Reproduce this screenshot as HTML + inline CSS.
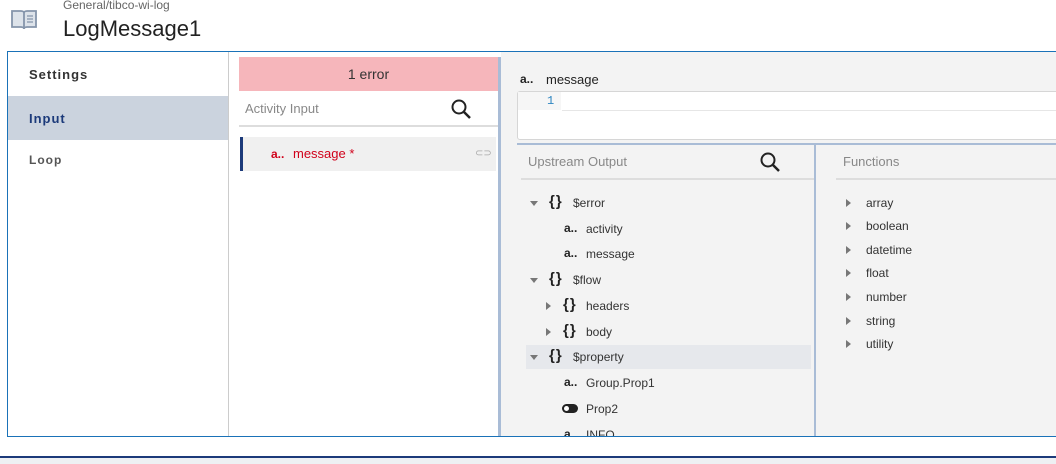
<!DOCTYPE html>
<html><head><meta charset="utf-8"><style>
*{box-sizing:border-box;margin:0;padding:0}
body{width:1056px;height:464px;overflow:hidden;background:#fff;font-family:"Liberation Sans",sans-serif;position:relative;color:#222}
.a{position:absolute}
.t{font-size:12px;color:#333;white-space:nowrap}
.ic{font-weight:bold;font-size:12px;color:#222}
.br{font-weight:bold;font-size:15px;color:#222;letter-spacing:1px}
.tri{width:0;height:0;border-left:4px solid transparent;border-right:4px solid transparent;border-top:5px solid #777}
.trr{width:0;height:0;border-top:4px solid transparent;border-bottom:4px solid transparent;border-left:5px solid #777}
</style></head><body>
<svg class="a" style="left:10px;top:8px" width="28" height="24" viewBox="0 0 28 24"><path d="M2 3h9c2 0 3 1 3 2v16c0-1-1-2-3-2H2z M26 3h-9c-2 0-3 1-3 2v16c0-1 1-2 3-2h9z" fill="#dde3ea" stroke="#8595ab" stroke-width="1.8"/><path d="M17 8h6M17 11h6M17 14h6" stroke="#8595ab" stroke-width="1.3"/></svg>
<div class="a" style="left:63px;top:-2px;font-size:12px;color:#666">General/tibco-wi-log</div>
<div class="a" style="left:63px;top:16px;font-size:22px;color:#222">LogMessage1</div>
<div class="a" style="left:7px;top:51px;width:1049px;height:386px;border:1px solid #1a72b8;border-right:none"></div>
<div class="a" style="left:8px;top:96px;width:221px;height:44px;background:#cbd3de"></div>
<div class="a" style="left:29px;top:67px;font-size:13px;font-weight:bold;letter-spacing:1px;color:#333">Settings</div>
<div class="a" style="left:29px;top:111px;font-size:13px;font-weight:bold;letter-spacing:1px;color:#1c3a7a">Input</div>
<div class="a" style="left:29px;top:153px;font-size:12px;font-weight:bold;letter-spacing:1px;color:#555">Loop</div>
<div class="a" style="left:228px;top:52px;width:1px;height:384px;background:#ccc"></div>
<div class="a" style="left:239px;top:57px;width:259px;height:34px;background:#f6b6bb;text-align:center;line-height:34px;font-size:14px;color:#333">1 error</div>
<div class="a" style="left:245px;top:101px;font-size:13px;color:#888">Activity Input</div>
<svg class="a" style="left:450px;top:98px" width="22" height="22"><circle cx="9" cy="9" r="6.5" fill="none" stroke="#222" stroke-width="2"/><path d="M14 14l6 6" stroke="#222" stroke-width="2.5"/></svg>
<div class="a" style="left:239px;top:125px;width:259px;height:2px;background:#ddd"></div>
<div class="a" style="left:240px;top:137px;width:256px;height:34px;background:#f0f0f0;border-left:3px solid #1c3a7a"></div>
<div class="a" style="left:271px;top:147px;font-size:12px;font-weight:bold;color:#d0021b">a..</div>
<div class="a" style="left:293px;top:146px;font-size:13px;color:#d0021b">message *</div>
<div class="a" style="left:475px;top:148px;font-size:10px;color:#aaa">⊂⊃</div>
<div class="a" style="left:498px;top:57px;width:3px;height:379px;background:#a9bcd6"></div>
<div class="a" style="left:501px;top:52px;width:555px;height:384px;background:#f3f3f3"></div>
<div class="a" style="left:520px;top:72px;font-size:12px;font-weight:bold;color:#222">a..</div>
<div class="a" style="left:546px;top:72px;font-size:13px;color:#222">message</div>
<div class="a" style="left:517px;top:91px;width:545px;height:49px;background:#fff;border:1px solid #d6d6d6;border-radius:3px"></div>
<div class="a" style="left:518px;top:92px;width:43px;height:18px;background:#f6f6f6"></div>
<div class="a" style="left:562px;top:110px;width:494px;height:1px;background:#e6e6e6"></div>
<div class="a" style="left:547px;top:94px;font-size:12px;color:#2e86c1;font-family:'Liberation Mono',monospace">1</div>
<div class="a" style="left:517px;top:143px;width:539px;height:2px;background:#a9bcd6"></div>
<div class="a" style="left:814px;top:145px;width:2px;height:291px;background:#a9bcd6"></div>
<div class="a" style="left:528px;top:154px;font-size:13px;color:#888">Upstream Output</div>
<svg class="a" style="left:759px;top:151px" width="22" height="22"><circle cx="9" cy="9" r="6.5" fill="none" stroke="#222" stroke-width="2"/><path d="M14 14l6 6" stroke="#222" stroke-width="2.5"/></svg>
<div class="a" style="left:521px;top:178px;width:293px;height:2px;background:#ddd"></div>
<div class="a" style="left:843px;top:154px;font-size:13px;color:#888">Functions</div>
<div class="a" style="left:836px;top:178px;width:220px;height:2px;background:#ddd"></div>
<div class="a" style="left:526px;top:345px;width:285px;height:24px;background:#e6e8ec"></div>
<div class="a tri" style="left:530px;top:201px"></div><div class="a br" style="left:549px;top:193px">{}</div><div class="a t" style="left:573px;top:196px">$error</div>
<div class="a ic" style="left:564px;top:221px">a..</div><div class="a t" style="left:586px;top:222px">activity</div>
<div class="a ic" style="left:564px;top:246px">a..</div><div class="a t" style="left:586px;top:247px">message</div>
<div class="a tri" style="left:530px;top:278px"></div><div class="a br" style="left:549px;top:270px">{}</div><div class="a t" style="left:573px;top:273px">$flow</div>
<div class="a trr" style="left:546px;top:302px"></div><div class="a br" style="left:563px;top:296px">{}</div><div class="a t" style="left:586px;top:299px">headers</div>
<div class="a trr" style="left:546px;top:328px"></div><div class="a br" style="left:563px;top:322px">{}</div><div class="a t" style="left:586px;top:325px">body</div>
<div class="a tri" style="left:530px;top:355px"></div><div class="a br" style="left:549px;top:347px">{}</div><div class="a t" style="left:573px;top:350px">$property</div>
<div class="a ic" style="left:564px;top:375px">a..</div><div class="a t" style="left:586px;top:376px">Group.Prop1</div>
<div class="a" style="left:562px;top:404px;width:16px;height:9px;border-radius:5px;background:#222"></div><div class="a" style="left:564px;top:406px;width:5px;height:5px;border-radius:3px;background:#fff"></div><div class="a t" style="left:586px;top:402px">Prop2</div>
<div class="a ic" style="left:564px;top:427px">a..</div><div class="a t" style="left:586px;top:428px">INFO</div>
<div class="a trr" style="left:846px;top:199px"></div><div class="a t" style="left:866px;top:196px">array</div>
<div class="a trr" style="left:846px;top:222px"></div><div class="a t" style="left:866px;top:219px">boolean</div>
<div class="a trr" style="left:846px;top:246px"></div><div class="a t" style="left:866px;top:243px">datetime</div>
<div class="a trr" style="left:846px;top:269px"></div><div class="a t" style="left:866px;top:266px">float</div>
<div class="a trr" style="left:846px;top:293px"></div><div class="a t" style="left:866px;top:290px">number</div>
<div class="a trr" style="left:846px;top:317px"></div><div class="a t" style="left:866px;top:314px">string</div>
<div class="a trr" style="left:846px;top:340px"></div><div class="a t" style="left:866px;top:337px">utility</div>
<div class="a" style="left:0;top:437px;width:1056px;height:20px;background:#fff"></div>
<div class="a" style="left:7px;top:436px;width:1049px;height:1px;background:#1a72b8"></div>
<div class="a" style="left:0;top:456px;width:1056px;height:2px;background:#1c3a7a"></div>
<div class="a" style="left:0;top:458px;width:1056px;height:6px;background:#eef0f3"></div>
</body></html>
